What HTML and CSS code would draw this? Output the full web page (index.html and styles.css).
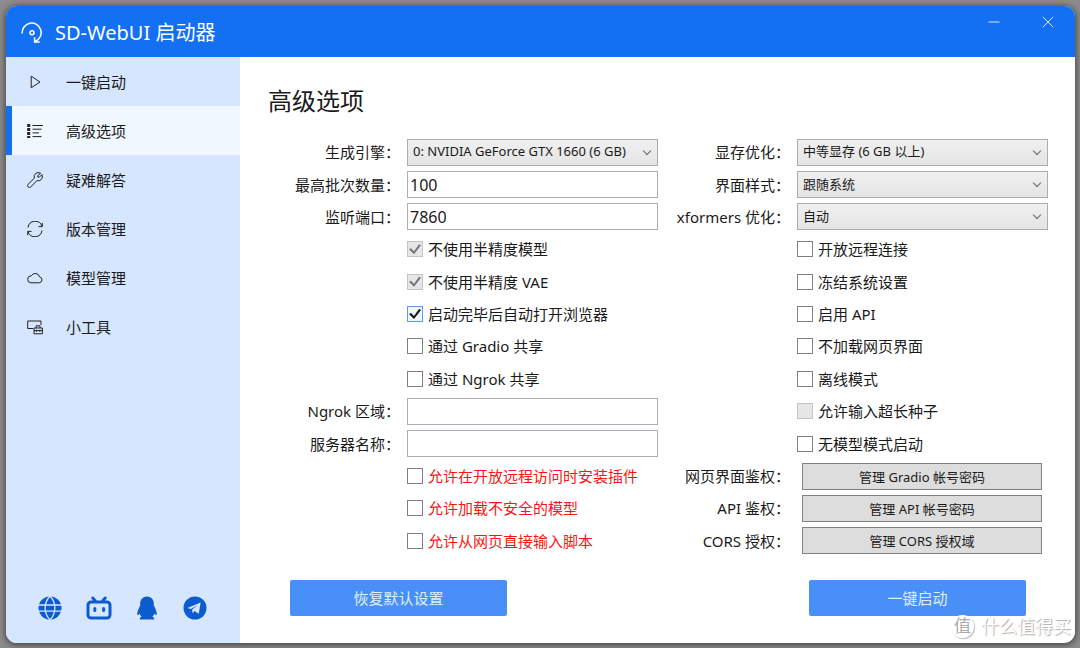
FILE: index.html
```html
<!DOCTYPE html>
<html lang="zh-CN">

	<head>
		<meta charset="UTF-8">
		<title>SD-WebUI 启动器</title>
		<link rel="stylesheet" href="styles.css">
	</head>

	<body>
		<div class="window">
			<header class="titlebar">
				<svg class="logo" viewBox="0 0 22 22">
					<path d="M1.2 11.5A9.5 9.5 0 1 1 14.5 19.3M13.6 15.2V20H18.8" />
					<circle cx="11" cy="10.8" r="2" />
				</svg>
				<h1>SD-WebUI 启动器</h1>
				<button class="winBtn" type="button" aria-label="最小化">
					<svg viewBox="0 0 12 12"><path d="M0.5 6H11.5" /></svg>
				</button>
				<button class="winBtn" type="button" aria-label="关闭">
					<svg viewBox="0 0 12 12"><path d="M0.8 0.8L11.2 11.2M11.2 0.8L0.8 11.2" /></svg>
				</button>
			</header>

			<div class="content">
				<aside class="sidebar">
					<nav>
						<a href="#start">
							<svg viewBox="0 0 16 16"><path d="M4.2 2.2V13.8L13 8Z" /></svg>
							一键启动
						</a>
						<a href="#options" class="active">
							<svg viewBox="0 0 16 16"><path d="M5.5 2.5H16M5.5 6.2H14.5M5.5 9.9H12M5.5 13.6H14.5" /><path class="dots" d="M1.7 1V15" /></svg>
							高级选项
						</a>
						<a href="#help">
							<svg viewBox="0 0 16 16"><path d="M13.6 1.2A4.2 4.2 0 0 0 7.4 6.2L1.1 12.2A1.8 1.8 0 0 0 3.8 14.9L9.9 8.6A4.2 4.2 0 0 0 14.9 2.6L12.3 5.2L10.6 4.9L10.7 3.7Z" /></svg>
							疑难解答
						</a>
						<a href="#version">
							<svg viewBox="0 0 16 16"><path d="M1 6.5A7.2 7.2 0 0 1 15 5.3M15.3 1.8V5.6H11.5M15 9.5A7.2 7.2 0 0 1 1 10.7M0.7 14.2V10.4H4.5" /></svg>
							版本管理
						</a>
						<a href="#model">
							<svg viewBox="0 0 16 16"><path d="M4 12.8H12.4A3 3 0 0 0 12.6 6.9A4.5 4.5 0 0 0 4.3 5.8A3.5 3.5 0 0 0 4 12.8Z" /></svg>
							模型管理
						</a>
						<a href="#tools">
							<svg viewBox="0 0 16 16"><path d="M14 6V2H0.7V9.5H6M7 9H15.4V14.8H7ZM9.2 9V6.8H13V9M7 11.6H15.4M9.5 10.8V12.8M12.8 10.8V12.8" /></svg>
							小工具
						</a>
					</nav>
					<div class="social">
						<a href="#site" aria-label="网站">
							<svg viewBox="0 0 24 24"><circle cx="12" cy="12" r="11.5" /><path class="cut" d="M0 9H24M0 15.2H24M12 0C5.5 7 5.5 17 12 24M12 0C18.5 7 18.5 17 12 24" /></svg>
						</a>
						<a href="#bilibili" aria-label="哔哩哔哩">
							<svg class="wide" viewBox="0 0 26 24"><path class="line" d="M5 6H21A3 3 0 0 1 24 9V19A3 3 0 0 1 21 22H5A3 3 0 0 1 2 19V9A3 3 0 0 1 5 6ZM6.8 2L9 4.5M19.2 2L17 4.5M8.8 12.5V14.5M17.6 12.5V14.5" /></svg>
						</a>
						<a href="#qq" aria-label="QQ">
							<svg viewBox="0 0 24 24"><path d="M12 .5C8 .5 5.2 3.5 5.2 7.5V9.5C4.1 11.5 2.2 15 2.2 18C2.2 19.5 3 19.6 4.6 17.6C5 19 5.8 20 6.6 20.8C5 21.5 4.6 22.4 4.8 23.5H19.2C19.4 22.4 19 21.5 17.4 20.8C18.2 20 19 19 19.4 17.6C21 19.6 21.8 19.5 21.8 18C21.8 15 19.9 11.5 18.8 9.5V7.5C18.8 3.5 16 .5 12 .5Z" /></svg>
						</a>
						<a href="#telegram" aria-label="Telegram">
							<svg viewBox="0 0 24 24"><circle cx="12" cy="12" r="11.5" /><path class="plane" d="M4.5 12L17.6 6.6L15.8 17.8L11.7 15L9.5 17.2L9.2 13.5L14.6 9.2L7.8 13Z" /></svg>
						</a>
					</div>
				</aside>

				<main>
					<h2>高级选项</h2>
					<form id="optionForm">
						<div class="col">
							<label class="name" for="engine">生成引擎：</label>
							<div class="select"><select id="engine"><option>0: NVIDIA GeForce GTX 1660 (6 GB)</option></select></div>
							<label class="name" for="batch">最高批次数量：</label>
							<input type="text" id="batch" value="100">
							<label class="name" for="port">监听端口：</label>
							<input type="text" id="port" value="7860">
							<label class="check"><input type="checkbox" checked disabled>不使用半精度模型</label>
							<label class="check"><input type="checkbox" checked disabled>不使用半精度 VAE</label>
							<label class="check"><input type="checkbox" checked>启动完毕后自动打开浏览器</label>
							<label class="check"><input type="checkbox">通过 Gradio 共享</label>
							<label class="check"><input type="checkbox">通过 Ngrok 共享</label>
							<label class="name" for="region">Ngrok 区域：</label>
							<input type="text" id="region">
							<label class="name" for="server">服务器名称：</label>
							<input type="text" id="server">
							<label class="check danger"><input type="checkbox">允许在开放远程访问时安装插件</label>
							<label class="check danger"><input type="checkbox">允许加载不安全的模型</label>
							<label class="check danger"><input type="checkbox">允许从网页直接输入脚本</label>
						</div>

						<div class="col">
							<label class="name" for="vram">显存优化：</label>
							<div class="select"><select id="vram"><option>中等显存 (6 GB 以上)</option></select></div>
							<label class="name" for="theme">界面样式：</label>
							<div class="select"><select id="theme"><option>跟随系统</option></select></div>
							<label class="name" for="xformers">xformers 优化：</label>
							<div class="select"><select id="xformers"><option>自动</option></select></div>
							<label class="check"><input type="checkbox">开放远程连接</label>
							<label class="check"><input type="checkbox">冻结系统设置</label>
							<label class="check"><input type="checkbox">启用 API</label>
							<label class="check"><input type="checkbox">不加载网页界面</label>
							<label class="check"><input type="checkbox">离线模式</label>
							<label class="check"><input type="checkbox" disabled>允许输入超长种子</label>
							<label class="check"><input type="checkbox">无模型模式启动</label>
							<label class="name" for="gradioAuth">网页界面鉴权：</label>
							<button class="manage" type="button" id="gradioAuth">管理 Gradio 帐号密码</button>
							<label class="name" for="apiAuth">API 鉴权：</label>
							<button class="manage" type="button" id="apiAuth">管理 API 帐号密码</button>
							<label class="name" for="cors">CORS 授权：</label>
							<button class="manage" type="button" id="cors">管理 CORS 授权域</button>
						</div>
					</form>
					<div class="actions">
						<button type="button">恢复默认设置</button>
						<button type="button">一键启动</button>
					</div>
				</main>
			</div>

			<div class="watermark"><span class="seal">值</span>什么值得买</div>
		</div>
	</body>

</html>
```
FILE: styles.css
```css
* {
	box-sizing: border-box;
	margin: 0;
	padding: 0;
}

body {
	background: #8c8c8c;
	color: #1a1a1a;
	font: 15px/20px "Noto Sans", "Noto Sans CJK SC", sans-serif;
}

button,
input,
select {
	font-family: inherit;
	color: inherit;
}

a {
	color: inherit;
	text-decoration: none;
}

svg {
	display: block;
	fill: none;
	stroke: currentColor;
}

.window {
	position: relative;
	display: flex;
	flex-direction: column;
	min-height: calc(100vh - 11px);
	margin: 6px 5px 5px 6px;
	border-radius: 11px;
	background: #fff;
	overflow: hidden;
	box-shadow: 0 1px 6px 1px #444;
}

/* title bar */
.titlebar {
	display: flex;
	align-items: center;
	height: 51px;
	padding: 2px 0 0 15px;
	background: #1370f3;
	color: #fff;
}

.logo {
	width: 22px;
	height: 22px;
	stroke-width: 1.5;
}

.titlebar h1 {
	flex: 1;
	margin-left: 12px;
	font-size: 20px;
	line-height: 28px;
	font-weight: 400;
}

.winBtn {
	align-self: flex-start;
	width: 54px;
	height: 28px;
	padding: 0 21px;
	border: none;
	background: none;
	color: #d8e7fd;
}

.content {
	flex: 1;
	display: flex;
}

/* sidebar */
.sidebar {
	display: flex;
	flex-direction: column;
	justify-content: space-between;
	width: 234px;
	background: #d6e6fe;
}

.sidebar nav a {
	display: flex;
	align-items: center;
	gap: 23px;
	height: 49px;
	padding-left: 15px;
	border-left: 6px solid transparent;
}

.sidebar nav a.active {
	border-left-color: #1370f3;
	background: #eff7ff;
}

.sidebar nav svg {
	width: 16px;
	height: 16px;
	stroke: #222;
}

.sidebar nav .dots {
	stroke-width: 3;
	stroke-dasharray: 3 1;
}

.social {
	display: flex;
	justify-content: space-between;
	padding: 0 33px 23px 32px;
	color: #0c5ccf;
}

.social svg {
	width: 24px;
	height: 24px;
	fill: currentColor;
	stroke: none;
}

.social .wide {
	width: 26px;
}

.social .cut {
	fill: none;
	stroke: #d6e6fe;
	stroke-width: 1.3;
}

.social .line {
	fill: none;
	stroke: currentColor;
	stroke-width: 3;
	stroke-linecap: round;
}

.social .plane {
	fill: #d6e6fe;
}

/* options page */
main {
	flex: 1;
	display: flex;
	flex-direction: column;
	padding: 26px 27px 27px 28px;
}

h2 {
	margin-bottom: 17px;
	font-size: 24px;
	line-height: 36px;
	font-weight: 400;
}

form {
	flex: 1;
	display: grid;
	grid-template-columns: 1fr 1fr;
}

.col {
	display: grid;
	grid-template-columns: 139px 1fr;
	grid-auto-rows: 1fr;
	align-items: center;
}

.name {
	padding-right: 7px;
	text-align: right;
	white-space: nowrap;
}

input[type="text"] {
	width: 100%;
	height: 27px;
	padding: 0 2px;
	border: 1px solid #abadb3;
	background: #fff;
	font-size: 16px;
}

.select {
	position: relative;
}

.select::after {
	content: "";
	position: absolute;
	top: 9px;
	right: 8px;
	width: 5px;
	height: 5px;
	border: solid #666;
	border-width: 0 1px 1px 0;
	transform: rotate(45deg);
	pointer-events: none;
}

select {
	display: block;
	width: 100%;
	height: 27px;
	padding: 0 20px 2px 5px;
	border: 1px solid #acacac;
	border-radius: 0;
	background: linear-gradient(#f0f0f0, #e4e4e4);
	font-size: 13px;
	appearance: none;
}

.check {
	grid-column: 2;
	display: flex;
	align-items: center;
	gap: 5px;
	white-space: nowrap;
}

.check input {
	width: 16px;
	height: 16px;
	border: 1px solid #808080;
	background: #fff;
	appearance: none;
}

.check input:checked {
	border-color: #5a9bf8;
	background: #f0f6ff;
}

.check input:disabled {
	border-color: #c4c4c4;
	background: #e6e6e6;
}

.check input:checked::after {
	content: "";
	display: block;
	height: 14px;
	background: #151515;
	clip-path: polygon(1px 7px, 3px 6px, 6px 9px, 11px 2px, 13px 3px, 6px 12px);
}

.check input:disabled:checked::after {
	background: #777;
}

.danger {
	color: #fb1414;
}

.manage {
	height: 27px;
	margin: 0 6px 0 5px;
	border: 1px solid #808080;
	background: #ddd;
	font-size: 13px;
}

.actions {
	display: flex;
	justify-content: space-between;
	margin-top: 23px;
	padding: 0 22px;
}

.actions button {
	width: 217px;
	height: 36px;
	padding-bottom: 2px;
	border: none;
	border-radius: 2px;
	background: #4890f7;
	color: #e0edff;
	font-size: 15px;
}

.watermark {
	position: absolute;
	right: 4px;
	bottom: 5px;
	display: flex;
	align-items: center;
	gap: 7px;
	color: #fff;
	font-size: 18px;
	line-height: 24px;
	text-shadow: 1px 1px 1px #aaa;
}

.seal {
	width: 23px;
	height: 23px;
	border-radius: 50%;
	background: #fff;
	box-shadow: 1px 1px 1px #bbb;
	color: #aaa;
	font-size: 17px;
	line-height: 22px;
	text-align: center;
	text-shadow: none;
}
```
